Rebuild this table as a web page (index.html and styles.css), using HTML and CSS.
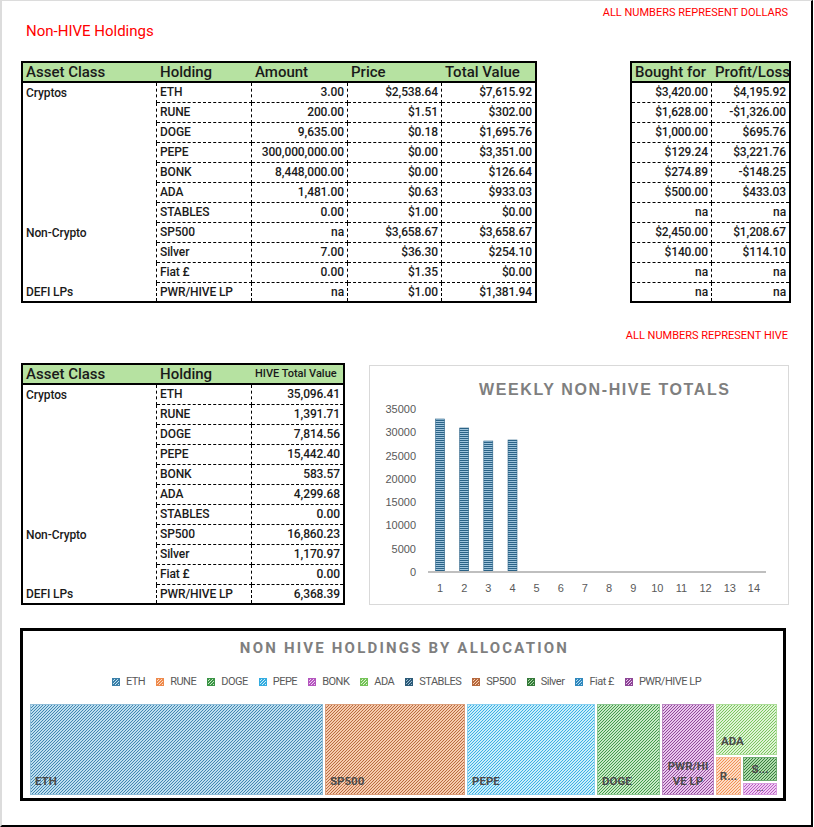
FILE: index.html
```html
<!DOCTYPE html>
<html>
<head>
<meta charset="utf-8">
<link rel="stylesheet" href="styles.css">
</head>
<body>
<div class="frame">
  <div class="note">ALL NUMBERS REPRESENT DOLLARS</div>
  <div class="title">Non-HIVE Holdings</div>

  <div class="top-row">
    <table class="sheet t-main">
      <tr>
        <th class="w134">Asset Class</th><th class="w95">Holding</th><th class="w96">Amount</th><th class="w94">Price</th><th class="w93">Total Value</th>
      </tr>
      <tr><td class="cls">Cryptos</td><td>ETH</td><td class="num">3.00</td><td class="num">$2,538.64</td><td class="num">$7,615.92</td></tr>
      <tr><td class="cls"></td><td>RUNE</td><td class="num">200.00</td><td class="num">$1.51</td><td class="num">$302.00</td></tr>
      <tr><td class="cls"></td><td>DOGE</td><td class="num">9,635.00</td><td class="num">$0.18</td><td class="num">$1,695.76</td></tr>
      <tr><td class="cls"></td><td>PEPE</td><td class="num">300,000,000.00</td><td class="num">$0.00</td><td class="num">$3,351.00</td></tr>
      <tr><td class="cls"></td><td>BONK</td><td class="num">8,448,000.00</td><td class="num">$0.00</td><td class="num">$126.64</td></tr>
      <tr><td class="cls"></td><td>ADA</td><td class="num">1,481.00</td><td class="num">$0.63</td><td class="num">$933.03</td></tr>
      <tr><td class="cls"></td><td>STABLES</td><td class="num">0.00</td><td class="num">$1.00</td><td class="num">$0.00</td></tr>
      <tr><td class="cls">Non-Crypto</td><td>SP500</td><td class="num">na</td><td class="num">$3,658.67</td><td class="num">$3,658.67</td></tr>
      <tr><td class="cls"></td><td>Silver</td><td class="num">7.00</td><td class="num">$36.30</td><td class="num">$254.10</td></tr>
      <tr><td class="cls"></td><td>Fiat £</td><td class="num">0.00</td><td class="num">$1.35</td><td class="num">$0.00</td></tr>
      <tr><td class="cls">DEFI LPs</td><td>PWR/HIVE LP</td><td class="num">na</td><td class="num">$1.00</td><td class="num">$1,381.94</td></tr>
    </table>

    <table class="sheet t-pl">
      <tr><th class="w80">Bought for</th><th class="w77">Profit/Loss</th></tr>
      <tr><td class="num">$3,420.00</td><td class="num">$4,195.92</td></tr>
      <tr><td class="num">$1,628.00</td><td class="num">-$1,326.00</td></tr>
      <tr><td class="num">$1,000.00</td><td class="num">$695.76</td></tr>
      <tr><td class="num">$129.24</td><td class="num">$3,221.76</td></tr>
      <tr><td class="num">$274.89</td><td class="num">-$148.25</td></tr>
      <tr><td class="num">$500.00</td><td class="num">$433.03</td></tr>
      <tr><td class="num">na</td><td class="num">na</td></tr>
      <tr><td class="num">$2,450.00</td><td class="num">$1,208.67</td></tr>
      <tr><td class="num">$140.00</td><td class="num">$114.10</td></tr>
      <tr><td class="num">na</td><td class="num">na</td></tr>
      <tr><td class="num">na</td><td class="num">na</td></tr>
    </table>
  </div>

  <div class="note note2">ALL NUMBERS REPRESENT HIVE</div>

  <div class="mid-row">
    <table class="sheet t-hive">
      <tr><th class="w134">Asset Class</th><th class="w95">Holding</th><th class="w91 small-th">HIVE Total Value</th></tr>
      <tr><td class="cls">Cryptos</td><td>ETH</td><td class="num">35,096.41</td></tr>
      <tr><td class="cls"></td><td>RUNE</td><td class="num">1,391.71</td></tr>
      <tr><td class="cls"></td><td>DOGE</td><td class="num">7,814.56</td></tr>
      <tr><td class="cls"></td><td>PEPE</td><td class="num">15,442.40</td></tr>
      <tr><td class="cls"></td><td>BONK</td><td class="num">583.57</td></tr>
      <tr><td class="cls"></td><td>ADA</td><td class="num">4,299.68</td></tr>
      <tr><td class="cls"></td><td>STABLES</td><td class="num">0.00</td></tr>
      <tr><td class="cls">Non-Crypto</td><td>SP500</td><td class="num">16,860.23</td></tr>
      <tr><td class="cls"></td><td>Silver</td><td class="num">1,170.97</td></tr>
      <tr><td class="cls"></td><td>Fiat £</td><td class="num">0.00</td></tr>
      <tr><td class="cls">DEFI LPs</td><td>PWR/HIVE LP</td><td class="num">6,368.39</td></tr>
    </table>

    <div class="chart">
      <svg width="418" height="238" viewBox="0 0 418 238" xmlns="http://www.w3.org/2000/svg">
        <defs>
          <pattern id="hstripe" width="4" height="2" patternUnits="userSpaceOnUse">
            <rect width="4" height="2" fill="#9fc4dc"/>
            <rect width="4" height="1" fill="#2b6387"/>
          </pattern>
        </defs>
        <text class="ctitle" x="234" y="29" text-anchor="middle" textLength="250" lengthAdjust="spacing">WEEKLY NON-HIVE TOTALS</text>
        <g class="ylab" text-anchor="end">
          <text x="46" y="47">35000</text>
          <text x="46" y="70.3">30000</text>
          <text x="46" y="93.6">25000</text>
          <text x="46" y="116.9">20000</text>
          <text x="46" y="140.1">15000</text>
          <text x="46" y="163.4">10000</text>
          <text x="46" y="186.7">5000</text>
          <text x="46" y="210">0</text>
        </g>
        <g fill="url(#hstripe)" stroke="#2b6387" stroke-width="0.6">
          <rect x="65.6" y="53" width="9" height="152"/>
          <rect x="89.7" y="62" width="9" height="143"/>
          <rect x="113.8" y="75" width="9" height="130"/>
          <rect x="138" y="74" width="9" height="131"/>
        </g>
        <line x1="58" y1="206" x2="396" y2="206" stroke="#bfbfbf" stroke-width="2"/>
        <g class="xlab" text-anchor="middle">
          <text x="70.1" y="226">1</text>
          <text x="94.2" y="226">2</text>
          <text x="118.3" y="226">3</text>
          <text x="142.5" y="226">4</text>
          <text x="166.6" y="226">5</text>
          <text x="190.8" y="226">6</text>
          <text x="214.9" y="226">7</text>
          <text x="239.1" y="226">8</text>
          <text x="263.2" y="226">9</text>
          <text x="287.3" y="226">10</text>
          <text x="311.5" y="226">11</text>
          <text x="335.6" y="226">12</text>
          <text x="359.8" y="226">13</text>
          <text x="383.9" y="226">14</text>
        </g>
      </svg>
    </div>
  </div>

  <div class="treemap">
    <div class="tm-title">NON HIVE HOLDINGS BY ALLOCATION</div>
    <div class="legend">
      <span class="lg"><i class="mk c-eth"></i>ETH</span>
      <span class="lg"><i class="mk c-rune"></i>RUNE</span>
      <span class="lg"><i class="mk c-doge"></i>DOGE</span>
      <span class="lg"><i class="mk c-pepe"></i>PEPE</span>
      <span class="lg"><i class="mk c-bonk"></i>BONK</span>
      <span class="lg"><i class="mk c-ada"></i>ADA</span>
      <span class="lg"><i class="mk c-stables"></i>STABLES</span>
      <span class="lg"><i class="mk c-sp"></i>SP500</span>
      <span class="lg"><i class="mk c-silver"></i>Silver</span>
      <span class="lg"><i class="mk c-fiat"></i>Fiat £</span>
      <span class="lg"><i class="mk c-pwr"></i>PWR/HIVE LP</span>
    </div>
    <div class="tiles">
      <div class="tile c-eth tw293"><span class="tl">ETH</span></div>
      <div class="tile c-sp tw140"><span class="tl">SP500</span></div>
      <div class="tile c-pepe tw128"><span class="tl">PEPE</span></div>
      <div class="tile c-doge tw63"><span class="tl">DOGE</span></div>
      <div class="tile c-pwr tw52 centered-bottom"><span class="tl tl-wrap">PWR/HIVE LP</span></div>
      <div class="tcol tw61">
        <div class="tile c-ada th51"><span class="tl">ADA</span></div>
        <div class="trow">
          <div class="tile c-rune tw25 mid"><span class="tl">R...</span></div>
          <div class="tcol grow">
            <div class="tile c-silver th24 mid"><span class="tl">S...</span></div>
            <div class="tile c-bonk grow mid"><span class="tl tiny">...</span></div>
          </div>
        </div>
      </div>
    </div>
  </div>
</div>
</body>
</html>
```

FILE: styles.css
```css
html, body {
  margin: 0;
  padding: 0;
  background: #fff;
}

body {
  font-family: "Roboto", "Liberation Sans", sans-serif;
  color: #1a1a1a;
}

.frame {
  box-sizing: border-box;
  width: 813px;
  height: 827px;
  border-top: 1px solid #dcdcdc;
  border-left: 2px solid #dcdcdc;
  border-right: 2px solid #000;
  border-bottom: 2px solid #000;
  padding: 0 23px 0 19px;
  overflow: hidden;
}

.note {
  margin-top: 5px;
  height: 13px;
  line-height: 13px;
  font-size: 11px;
  color: #ff0000;
  text-align: right;
}

.title {
  margin-top: 3px;
  padding-left: 5px;
  height: 18px;
  line-height: 18px;
  font-size: 15px;
  color: #ff0000;
}

.top-row {
  margin-top: 21px;
  display: flex;
  gap: 93px;
  align-items: flex-start;
}

.note2 {
  margin-top: 26px;
}

.mid-row {
  margin-top: 21px;
  display: flex;
  gap: 24px;
  align-items: flex-start;
}

/* spreadsheet tables */
.sheet {
  border: 2px solid #000;
  border-spacing: 0;
  table-layout: fixed;
  flex: none;
}

.t-main { width: 516px; }
.t-pl { width: 161px; }
.t-hive { width: 324px; }

.sheet th,
.sheet td {
  box-sizing: border-box;
  padding: 0 3px;
  white-space: nowrap;
  overflow: hidden;
}

.sheet th {
  height: 20px;
  line-height: 18px;
  background: #b6e2a1;
  border-bottom: 2px solid #000;
  text-align: left;
  font-size: 15px;
  font-weight: 500;
  color: #1a1a1a;
}

.sheet td {
  height: 20px;
  line-height: 19px;
  font-size: 12px;
  letter-spacing: -0.1px;
  font-weight: 500;
  border-right: 1px dashed #000;
  border-bottom: 1px dashed #000;
}

.sheet td:last-child { border-right: none; }
.sheet tr:last-child td { border-bottom: none; height: 18px; line-height: 18px; }
.sheet td.cls { border-bottom: none; }
.sheet td.num { text-align: right; }

.sheet th.small-th {
  font-size: 11px;
  padding-right: 2px;
}

.w134 { width: 134px; }
.w95 { width: 95px; }
.w96 { width: 96px; }
.w94 { width: 94px; }
.w93 { width: 93px; }
.w91 { width: 91px; }
.w80 { width: 80px; }
.w77 { width: 77px; }

/* bar chart */
.chart {
  box-sizing: border-box;
  width: 420px;
  height: 240px;
  margin-top: 2px;
  border: 1px solid #d9d9d9;
  flex: none;
}

.chart svg { display: block; }

.ctitle {
  font-family: "Liberation Sans", sans-serif;
  font-size: 16px;
  font-weight: bold;
  fill: #7f7f7f;
}

.ylab text,
.xlab text {
  font-family: "Liberation Sans", sans-serif;
  font-size: 11px;
  fill: #595959;
}

/* treemap */
.treemap {
  box-sizing: border-box;
  width: 766px;
  height: 173px;
  margin: 23px 0 0 -1px;
  border: 3px solid #000;
  padding: 8px 6px 3px 7px;
  display: flex;
  flex-direction: column;
}

.tm-title {
  height: 18px;
  line-height: 18px;
  text-align: center;
  font-size: 15px;
  font-weight: bold;
  letter-spacing: 2.2px;
  color: #7f7f7f;
  padding-left: 2px;
}

.legend {
  margin-top: 18px;
  height: 13px;
  display: flex;
  justify-content: center;
  gap: 11px;
  font-size: 11px;
  letter-spacing: -0.5px;
  line-height: 13px;
  color: #595959;
  padding-left: 6px;
}

.lg {
  display: flex;
  align-items: center;
  white-space: nowrap;
}

.mk {
  box-sizing: border-box;
  width: 8px;
  height: 8px;
  margin-right: 6px;
  border: 1px solid var(--d);
  background: repeating-linear-gradient(135deg, var(--d) 0 0.9px, var(--l) 0.9px 2.1213px);
}

.tiles {
  margin-top: 16px;
  height: 91px;
  display: flex;
  gap: 2px;
}

.tile {
  box-sizing: border-box;
  border: 1px solid var(--m);
  background: repeating-linear-gradient(135deg, var(--t) 0 0.7px, var(--l) 0.7px 2.1213px);
  display: flex;
  align-items: flex-end;
  padding: 0 4px 6px 4px;
  overflow: hidden;
  flex: none;
}

.tl {
  font-size: 11.5px;
  font-weight: bold;
  line-height: 14px;
  color: #4a4a4a;
  white-space: nowrap;
}

.tl-wrap {
  white-space: normal;
  word-break: break-all;
  text-align: center;
  line-height: 15px;
}

.centered-bottom { justify-content: center; padding: 0 2px 5px; }

.mid {
  align-items: center;
  justify-content: center;
  padding: 0;
}

.tiny { font-size: 8px; line-height: 8px; }

.tcol {
  display: flex;
  flex-direction: column;
  gap: 2px;
  flex: none;
}

.trow {
  display: flex;
  gap: 2px;
  flex: 1;
}

.grow { flex: 1; }

.tw293 { width: 293px; }
.tw140 { width: 140px; }
.tw128 { width: 128px; }
.tw63 { width: 63px; }
.tw52 { width: 52px; }
.tw61 { width: 61px; }
.tw25 { width: 25px; }
.th51 { height: 51px; }
.th24 { height: 24px; }

.c-eth { --d: #3a7fa8; --t: #4187b0; --l: #bedeef; --m: #8fbdd8; }
.c-rune { --d: #ee8a4c; --t: #ef9055; --l: #fddcc5; --m: #f5b894; }
.c-doge { --d: #3b9446; --t: #439a4d; --l: #c8e9c5; --m: #8cc691; }
.c-pepe { --d: #34ace0; --t: #3ab0e3; --l: #caedfa; --m: #8ad0f0; }
.c-bonk { --d: #b456be; --t: #b85dc1; --l: #f0cdf4; --m: #d79bde; }
.c-ada { --d: #74c358; --t: #7ac65f; --l: #dff3d5; --m: #acdc99; }
.c-stables { --d: #2b5a78; --t: #2b5a78; --l: #9fbdd0; --m: #2b5a78; }
.c-sp { --d: #b5683d; --t: #b86c42; --l: #f6cbae; --m: #da9e7b; }
.c-silver { --d: #357a3a; --t: #397e3e; --l: #addaab; --m: #6ca96f; }
.c-fiat { --d: #2f88bd; --t: #2f88bd; --l: #b5daf0; --m: #2f88bd; }
.c-pwr { --d: #8d4596; --t: #904a99; --l: #e9c6ed; --m: #bb87c2; }
```
